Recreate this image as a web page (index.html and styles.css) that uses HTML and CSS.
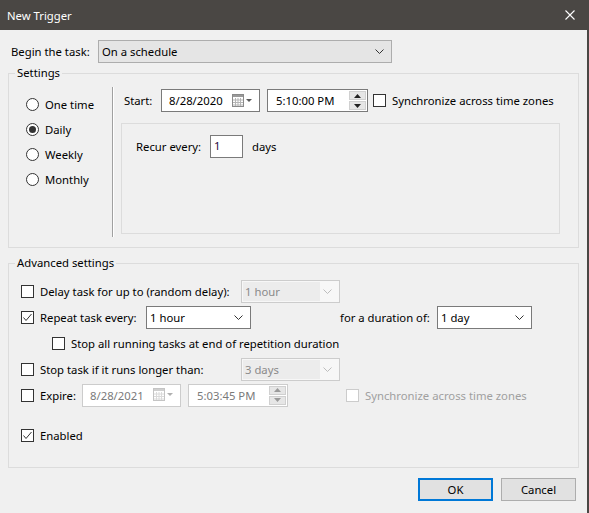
FILE: index.html
```html
<!DOCTYPE html>
<html lang="en">
<head>
  <meta charset="UTF-8">
  <title>New Trigger</title>
  <link rel="stylesheet" href="styles.css">
</head>
<body>
  <div class="window">
    <div class="titlebar">
      <span class="title">New Trigger</span>
      <svg class="close" width="10" height="10" viewBox="0 0 10 10"><path d="M0.5 0.5 L9.5 9.5 M9.5 0.5 L0.5 9.5" stroke="#fff" stroke-width="1.1" fill="none"/></svg>
    </div>

    <div class="content">
      <div class="begin-row">
        <span class="begin-label">Begin the task:</span>
        <div class="combo flat begin-combo">
          <span>On a schedule</span>
          <svg class="chev" width="9" height="5" viewBox="0 0 9 5"><path d="M0.5 0.5 L4.5 4.5 L8.5 0.5" stroke="#333" fill="none"/></svg>
        </div>
      </div>

      <fieldset class="group">
        <legend>Settings</legend>
        <div class="settings-body">
          <div class="freq">
            <div class="radio-row"><span class="radio"></span>One time</div>
            <div class="radio-row"><span class="radio on"></span>Daily</div>
            <div class="radio-row"><span class="radio"></span>Weekly</div>
            <div class="radio-row"><span class="radio"></span>Monthly</div>
          </div>
          <div class="sep"></div>
          <div class="schedule">
            <div class="start-row">
              <span class="start-label">Start:</span>
              <div class="field date-field">
                <span>8/28/2020</span>
                <svg class="cal" width="22" height="14" viewBox="0 0 22 14">
                  <rect x="0.5" y="0.5" width="11" height="12" fill="#fff" stroke="#8a8a8a"/>
                  <rect x="1" y="1" width="10" height="2" fill="#9a9a9a"/>
                  <path d="M3.5 4v8 M6 4v8 M8.5 4v8 M1 6h10 M1 8.5h10 M1 11h10" stroke="#b5b5b5" stroke-width="1"/>
                  <path d="M14 5 L20 5 L17 8 Z" fill="#5a5a5a"/>
                </svg>
              </div>
              <div class="field time-field">
                <span>5:10:00 PM</span>
                <div class="spin">
                  <div class="spin-btn"><svg width="7" height="4" viewBox="0 0 7 4"><path d="M0 4 L3.5 0 L7 4 Z" fill="#222"/></svg></div>
                  <div class="spin-btn"><svg width="7" height="4" viewBox="0 0 7 4"><path d="M0 0 L3.5 4 L7 0 Z" fill="#222"/></svg></div>
                </div>
              </div>
              <span class="check sync-check"></span>
              <span>Synchronize across time zones</span>
            </div>
            <div class="recur-panel">
              <div class="recur-row">
                <span class="recur-label">Recur every:</span>
                <div class="field num">1</div>
                <span>days</span>
              </div>
            </div>
          </div>
        </div>
      </fieldset>

      <fieldset class="group advanced">
        <legend>Advanced settings</legend>
        <div class="adv-body">
          <div class="adv-row">
            <span class="check"></span>
            <span class="lbl w-delay">Delay task for up to (random delay):</span>
            <div class="combo disabled w99">
              <span class="combo-text">1 hour</span>
              <svg class="chev" width="9" height="5" viewBox="0 0 9 5"><path d="M0.5 0.5 L4.5 4.5 L8.5 0.5" stroke="#bdbdbd" fill="none"/></svg>
            </div>
          </div>
          <div class="adv-row">
            <span class="check checked"><svg width="11" height="11" viewBox="0 0 11 11"><path d="M1.5 5.5 L4 8.5 L9.5 2" stroke="#333" fill="none"/></svg></span>
            <span class="lbl w-repeat">Repeat task every:</span>
            <div class="combo repeat-combo">
              <span>1 hour</span>
              <svg class="chev" width="9" height="5" viewBox="0 0 9 5"><path d="M0.5 0.5 L4.5 4.5 L8.5 0.5" stroke="#333" fill="none"/></svg>
            </div>
            <span class="lbl duration-label">for a duration of:</span>
            <div class="combo duration-combo">
              <span>1 day</span>
              <svg class="chev" width="9" height="5" viewBox="0 0 9 5"><path d="M0.5 0.5 L4.5 4.5 L8.5 0.5" stroke="#333" fill="none"/></svg>
            </div>
          </div>
          <div class="adv-row indent">
            <span class="check"></span>
            <span class="lbl">Stop all running tasks at end of repetition duration</span>
          </div>
          <div class="adv-row">
            <span class="check"></span>
            <span class="lbl w-delay">Stop task if it runs longer than:</span>
            <div class="combo disabled w99">
              <span class="combo-text">3 days</span>
              <svg class="chev" width="9" height="5" viewBox="0 0 9 5"><path d="M0.5 0.5 L4.5 4.5 L8.5 0.5" stroke="#bdbdbd" fill="none"/></svg>
            </div>
          </div>
          <div class="adv-row">
            <span class="check"></span>
            <span class="lbl w-expire">Expire:</span>
            <div class="field date-field off">
              <span>8/28/2021</span>
              <svg class="cal" width="22" height="14" viewBox="0 0 22 14">
                <rect x="0.5" y="0.5" width="11" height="12" fill="#fff" stroke="#c4c4c4"/>
                <rect x="1" y="1" width="10" height="2" fill="#cfcfcf"/>
                <path d="M3.5 4v8 M6 4v8 M8.5 4v8 M1 6h10 M1 8.5h10 M1 11h10" stroke="#dadada" stroke-width="1"/>
                <path d="M14 5 L20 5 L17 8 Z" fill="#b0b0b0"/>
              </svg>
            </div>
            <div class="field time-field off expire-time">
              <span>5:03:45 PM</span>
              <div class="spin">
                <div class="spin-btn"><svg width="7" height="4" viewBox="0 0 7 4"><path d="M0 4 L3.5 0 L7 4 Z" fill="#9a9a9a"/></svg></div>
                <div class="spin-btn"><svg width="7" height="4" viewBox="0 0 7 4"><path d="M0 0 L3.5 4 L7 0 Z" fill="#9a9a9a"/></svg></div>
              </div>
            </div>
            <span class="check off expire-sync"></span>
            <span class="lbl muted">Synchronize across time zones</span>
          </div>
          <div class="adv-row enabled-row">
            <span class="check checked"><svg width="11" height="11" viewBox="0 0 11 11"><path d="M1.5 5.5 L4 8.5 L9.5 2" stroke="#333" fill="none"/></svg></span>
            <span class="lbl">Enabled</span>
          </div>
        </div>
      </fieldset>

      <div class="buttons">
        <button class="btn default">OK</button>
        <button class="btn">Cancel</button>
      </div>
    </div>
  </div>
</body>
</html>
```

FILE: styles.css
```css
body {
  margin: 0;
  font-family: "Noto Sans", "Open Sans", sans-serif;
  font-size: 11.3px;
  color: #000;
  background: #f0f0f0;
  white-space: nowrap;
}
.window {
  width: 587px;
  height: 513px;
  background: #f0f0f0;
  border-right: 2px solid #4a4744;
  overflow: hidden;
}
.titlebar {
  height: 30px;
  background: #4a4744;
  display: flex;
  align-items: center;
  justify-content: space-between;
  padding: 0 12px 0 7px;
  color: #fff;
}
.close {
  display: block;
}

.begin-row {
  display: flex;
  align-items: center;
  margin-top: 10px;
  padding-left: 11px;
  height: 23px;
}
.begin-label {
  width: 87px;
}
.combo {
  height: 23px;
  box-sizing: border-box;
  border: 1px solid #7a7a7a;
  background: #fff;
  display: flex;
  align-items: center;
  justify-content: space-between;
  padding: 0 7px 0 3px;
}
.combo.flat {
  background: #e5e5e5;
  border-color: #adadad;
}
.begin-combo {
  width: 294px;
}
.combo.disabled {
  border-color: #cccccc;
  background: #f7f7f7;
  color: #8a8a8a;
  padding: 1px 7px 1px 1px;
}
.combo.disabled .combo-text {
  background: #ececec;
  height: 100%;
  width: 75px;
  padding-left: 2px;
  display: flex;
  align-items: center;
}
.w99 {
  width: 99px;
}
.chev {
  display: block;
}

.group {
  margin: 0 8px;
  padding: 0;
  border: 1px solid #dcdcdc;
  min-width: 0;
}
.group legend {
  padding: 0 2px;
  margin-left: 6px;
  line-height: 16px;
}
.content > .group:first-of-type {
  margin-top: 2px;
}
.advanced {
  margin-top: 7px;
}

.settings-body {
  display: flex;
}
.freq {
  width: 103px;
  box-sizing: border-box;
  padding: 11px 0 0 17px;
}
.radio-row {
  height: 25px;
  display: flex;
  align-items: center;
}
.radio {
  width: 13px;
  height: 13px;
  box-sizing: border-box;
  border: 1px solid #333;
  border-radius: 50%;
  background: #fff;
  margin-right: 6px;
  display: flex;
  align-items: center;
  justify-content: center;
}
.radio.on::after {
  content: "";
  width: 7px;
  height: 7px;
  border-radius: 50%;
  background: #333;
}
.sep {
  width: 1px;
  border-left: 1px solid #a0a0a0;
  background: #fff;
  margin: 6px 0 10px;
  height: 150px;
}
.schedule {
  padding-top: 8px;
}
.start-row {
  display: flex;
  align-items: center;
  height: 23px;
  padding-left: 10px;
}
.start-label {
  width: 37px;
}
.field {
  height: 23px;
  box-sizing: border-box;
  border: 1px solid #7a7a7a;
  background: #fff;
  display: flex;
  align-items: center;
}
.date-field {
  width: 99px;
  padding: 0 5px 0 7px;
  justify-content: space-between;
}
.cal {
  display: block;
}
.time-field {
  width: 101px;
  margin-left: 7px;
  padding: 0 1px 0 8px;
  justify-content: space-between;
}
.spin {
  width: 17px;
  height: 19px;
  display: flex;
  flex-direction: column;
  gap: 1px;
}
.spin-btn {
  flex: 1;
  background: #e6e6e6;
  border: 1px solid #d0d0d0;
  display: flex;
  align-items: center;
  justify-content: center;
}
.check {
  width: 13px;
  height: 13px;
  box-sizing: border-box;
  border: 1px solid #333;
  background: #fff;
  margin-right: 6px;
  flex: none;
  display: flex;
  align-items: center;
  justify-content: center;
}
.sync-check {
  margin-left: 5px;
}
.recur-panel {
  margin: 11px 0 0 7px;
  width: 439px;
  height: 111px;
  box-sizing: border-box;
  border: 1px solid #dcdcdc;
  padding: 11px 0 0 14px;
}
.recur-row {
  display: flex;
  align-items: center;
}
.recur-label {
  width: 74px;
}
.num {
  width: 33px;
  padding: 0 0 3px 3px;
  margin-right: 9px;
  color: #2b0a3d;
}

.adv-body {
  padding: 7px 0 19px 12px;
}
.adv-row {
  height: 26px;
  display: flex;
  align-items: center;
}
.adv-row.indent {
  padding-left: 31px;
}
.enabled-row {
  margin-top: 14px;
}
.w-delay {
  width: 201px;
}
.w-repeat {
  width: 106px;
}
.repeat-combo {
  width: 105px;
}
.duration-label {
  margin-left: 89px;
  width: 97px;
}
.duration-combo {
  width: 95px;
}
.w-expire {
  width: 42px;
}
.field.off {
  border-color: #cccccc;
  color: #7a7a7a;
}
.expire-time {
  width: 100px;
}
.check.off {
  border-color: #cccccc;
}
.expire-sync {
  margin-left: 58px;
}
.muted {
  color: #a0a0a0;
}

.buttons {
  display: flex;
  justify-content: flex-end;
  gap: 8px;
  margin-top: 10px;
  padding-right: 11px;
}
.btn {
  width: 75px;
  height: 23px;
  box-sizing: border-box;
  background: #e1e1e1;
  border: 1px solid #adadad;
  font-family: inherit;
  font-size: 11.3px;
  color: #000;
  padding: 0;
}
.btn.default {
  border: 2px solid #0078d7;
}
```
